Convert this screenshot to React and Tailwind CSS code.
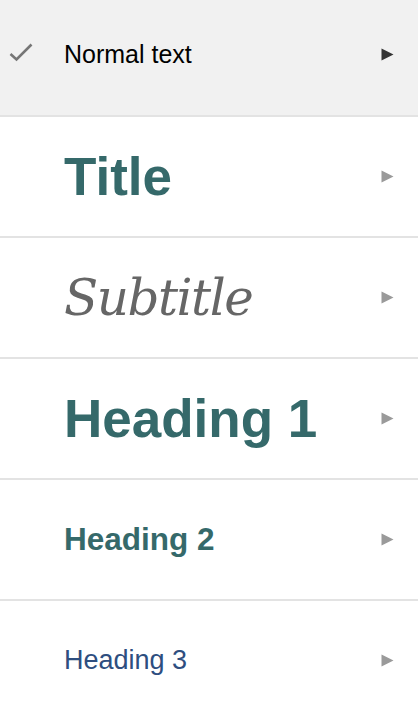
const rows = [
  { label: 'Heading 1', cls: "text-[53px] font-bold text-[#35696a] font-['Liberation_Sans',Arial,sans-serif]" },
];

function Arrow({ dark }) {
  return (
    <svg width="13" height="13" viewBox="0 0 13 13" className="shrink-0">
      <path d="M0.5 0.5 L12.5 6.5 L0.5 12.5 Z" fill={dark ? '#333333' : '#9a9a9a'} />
    </svg>
  );
}

function Row({ children, first, dark, check }) {
  return (
    <div
      className={`flex items-center justify-between pl-[64px] pr-[24px] relative ${
        first ? 'h-[115px] bg-[#f1f1f1] pb-[6px]' : 'h-[121px] border-t-2 border-[#e3e3e3] bg-white'
      }`}
    >
      {check && (
        <svg width="24" height="20" viewBox="0 0 24 20" className="absolute left-[9px] top-[43px]">
          <path d="M1.5 11 L7.5 16.5 L22.5 1.5" fill="none" stroke="#767676" strokeWidth="2.6" />
        </svg>
      )}
      <div className="leading-none whitespace-nowrap">{children}</div>
      <Arrow dark={dark} />
    </div>
  );
}

export default function App() {
  return (
    <div className="w-[418px] h-[720px] bg-white overflow-hidden">
      <Row first dark check>
        <span className="text-[25px] text-black font-['Liberation_Sans',Arial,sans-serif]">Normal text</span>
      </Row>
      <Row>
        <span className="text-[53px] font-bold text-[#35696a] font-['Liberation_Sans',Arial,sans-serif]">Title</span>
      </Row>
      <Row>
        <span className="text-[50px] italic text-[#666666] font-['DejaVu_Serif',Georgia,serif] tracking-[-1.5px]">Subtitle</span>
      </Row>
      <Row>
        <span className={rows[0].cls}>{rows[0].label}</span>
      </Row>
      <Row>
        <span className="text-[31.5px] font-bold text-[#35696a] font-['Liberation_Sans',Arial,sans-serif]">Heading 2</span>
      </Row>
      <Row>
        <span className="text-[27px] text-[#2e4e7f] font-['Liberation_Sans',Arial,sans-serif]">Heading 3</span>
      </Row>
    </div>
  );
}
